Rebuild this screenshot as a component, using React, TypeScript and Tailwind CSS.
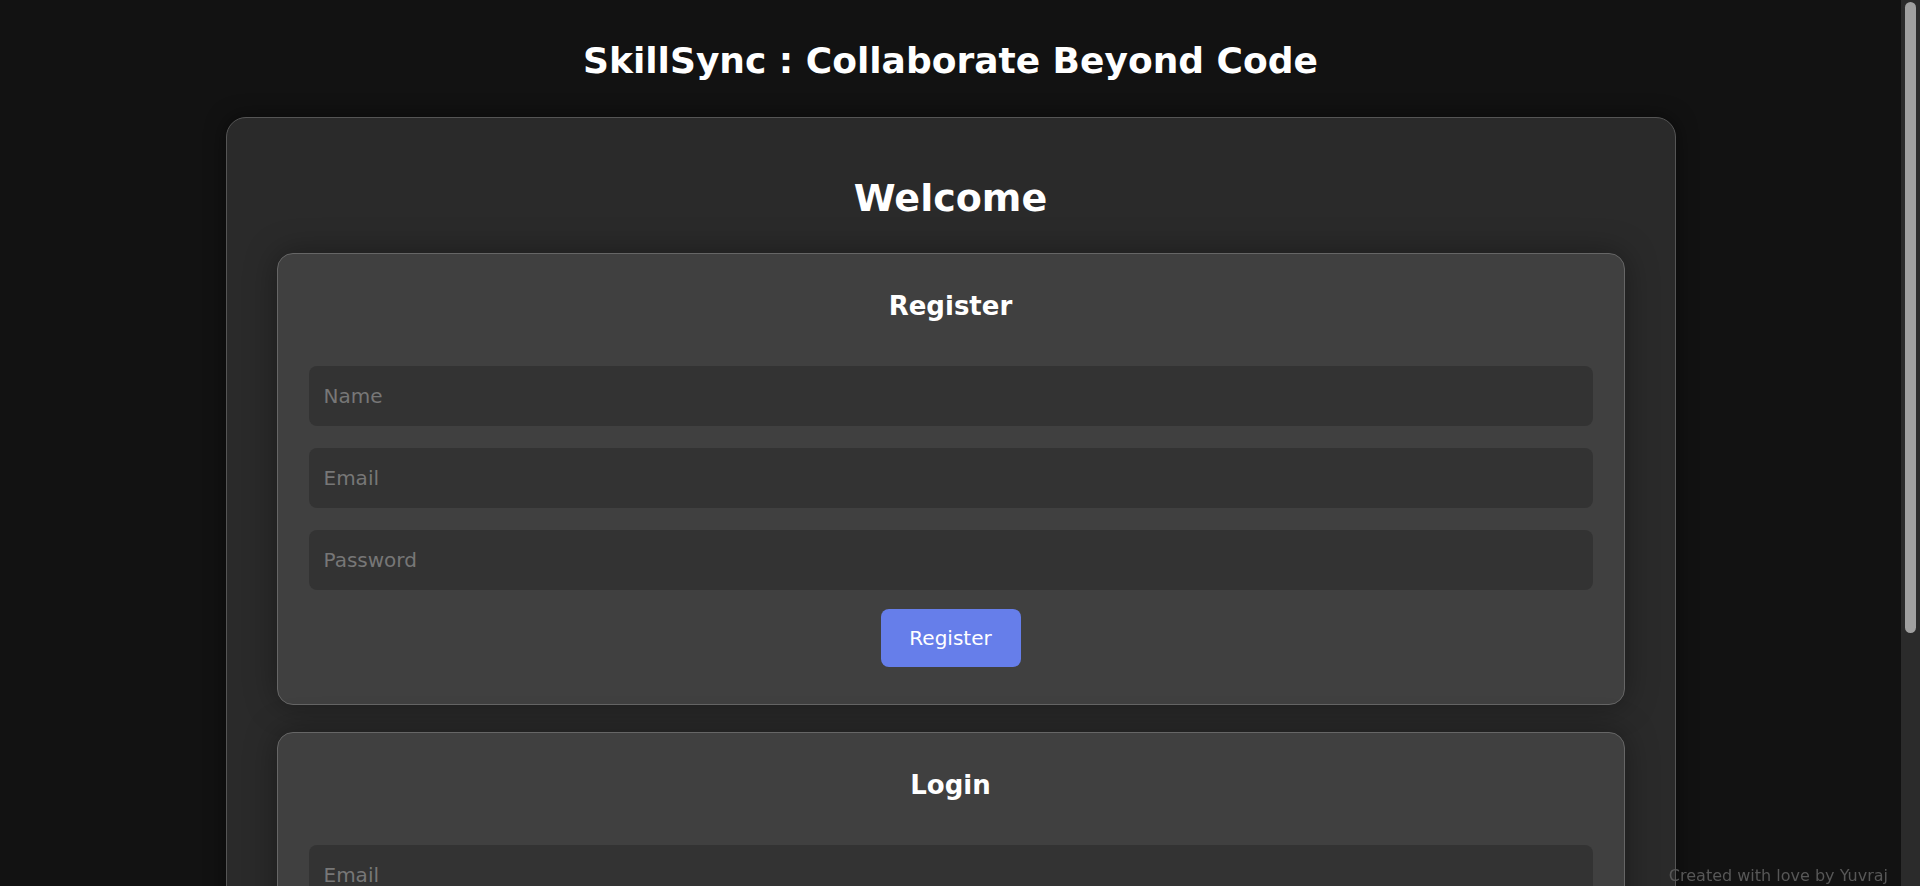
import { useState } from "react";

function Field({ placeholder, type = "text" }: { placeholder: string; type?: string }) {
  return (
    <input
      type={type}
      placeholder={placeholder}
      className="block h-[60px] w-full rounded-[8px] bg-[#333333] px-[15px] text-[20px] text-white outline-none placeholder:text-[#777777]"
    />
  );
}

function AuthCard({
  title,
  fields,
  action,
}: {
  title: string;
  fields: { placeholder: string; type?: string }[];
  action: string;
}) {
  return (
    <div className="rounded-[16px] border border-[#666666] bg-[#404040] px-[31px] pb-[37px] pt-[31px] shadow-[0_0_32px_rgba(0,0,0,0.35)]">
      <h2 className="text-center text-[26px] font-bold leading-[42px] text-white">{title}</h2>
      <div className="mt-[39px] flex flex-col gap-[22px]">
        {fields.map((f) => (
          <Field key={f.placeholder} placeholder={f.placeholder} type={f.type} />
        ))}
      </div>
      <div className="mt-[19px] flex justify-center">
        <button
          type="button"
          className="h-[58px] w-[140px] rounded-[8px] bg-[#667eea] text-[20px] text-white"
        >
          {action}
        </button>
      </div>
    </div>
  );
}

export default function App() {
  const [, setTick] = useState(0);

  return (
    <div
      className="flex h-screen bg-[#121212] text-white"
      style={{ fontFamily: '"DejaVu Sans", "Open Sans", sans-serif' }}
    >
      <main
        className="min-w-0 flex-1 overflow-y-auto [scrollbar-width:none]"
        onDoubleClick={() => setTick((t) => t + 1)}
      >
        <h1 className="pt-[37px] text-center text-[36px] font-bold leading-[48px]">
          SkillSync : Collaborate Beyond Code
        </h1>

        <div className="mx-auto mt-[32px] mb-[40px] w-[1450px] rounded-[20px] border border-[#555555] bg-[#2a2a2a] p-[50px] shadow-[0_0_20px_rgba(0,0,0,0.5)]">
          <h2 className="text-center text-[38px] font-bold leading-[60px]">Welcome</h2>

          <div className="mt-[25px] flex flex-col gap-[27px]">
            <AuthCard
              title="Register"
              fields={[
                { placeholder: "Name" },
                { placeholder: "Email", type: "email" },
                { placeholder: "Password", type: "password" },
              ]}
              action="Register"
            />
            <AuthCard
              title="Login"
              fields={[
                { placeholder: "Email", type: "email" },
                { placeholder: "Password", type: "password" },
              ]}
              action="Login"
            />
          </div>
        </div>
      </main>

      {/* scrollbar track */}
      <div className="flex w-[19px] shrink-0 justify-center bg-[#2b2b2b] pt-[2px]">
        <div className="h-[631px] w-[11px] rounded-full bg-[#a0a0a0]" />
      </div>

      {/* footer credit */}
      <p className="fixed bottom-0 right-[32px] text-[16px] leading-[20px] text-[#575757]">
        Created with love by Yuvraj
      </p>
    </div>
  );
}
